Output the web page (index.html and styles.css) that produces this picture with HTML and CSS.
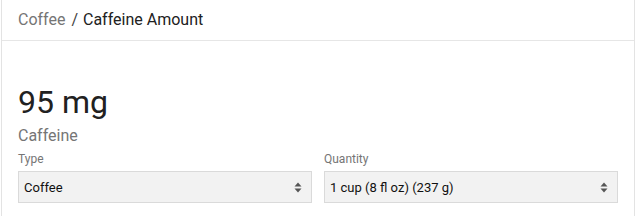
FILE: index.html
```html
<!DOCTYPE html>
<html lang="en">
<head>
    <meta charset="UTF-8">
    <meta name="viewport" content="width=device-width, initial-scale=1.0">
    <title>Caffeine Amount</title>
    <link rel="stylesheet" href="styles.css">
</head>
<body>
    <div class="card">
        <div class="card-header">
            <span class="crumb">Coffee</span>
            <span class="sep">/</span>
            <span class="current">Caffeine Amount</span>
        </div>
        <div class="card-body">
            <div class="amount">95 mg</div>
            <div class="amount-label">Caffeine</div>
            <div class="fields">
                <div class="field">
                    <label class="field-label">Type</label>
                    <div class="select-wrap">
                        <select class="select">
                            <option>Coffee</option>
                        </select>
                        <svg class="select-arrow" width="8" height="11" viewBox="0 0 8 11">
                            <path d="M4 0.5 L7.5 4.5 L0.5 4.5 Z M4 10.5 L7.5 6.5 L0.5 6.5 Z" fill="#555"/>
                        </svg>
                    </div>
                </div>
                <div class="field">
                    <label class="field-label">Quantity</label>
                    <div class="select-wrap">
                        <select class="select">
                            <option>1 cup (8 fl oz) (237 g)</option>
                        </select>
                        <svg class="select-arrow" width="8" height="11" viewBox="0 0 8 11">
                            <path d="M4 0.5 L7.5 4.5 L0.5 4.5 Z M4 10.5 L7.5 6.5 L0.5 6.5 Z" fill="#555"/>
                        </svg>
                    </div>
                </div>
            </div>
        </div>
    </div>
</body>
</html>
```

FILE: styles.css
```css
* {
    margin: 0;
    padding: 0;
    box-sizing: border-box;
}

body {
    font-family: Roboto, "Liberation Sans", sans-serif;
    color: #212121;
    background: #fff;
}

.card {
    margin-left: 1px;
    width: 634px;
    min-height: 216px;
    border-left: 1px solid #e3e3e3;
    border-right: 1px solid #e3e3e3;
}

.card-header {
    height: 41px;
    line-height: 40px;
    padding: 0 16px;
    font-size: 16px;
    border-bottom: 1px solid #e6e6e6;
}

.crumb {
    color: #757575;
}

.sep {
    color: #424242;
    margin: 0 1px 0 2px;
}

.card-body {
    padding: 43px 16px 0;
}

.amount {
    font-size: 32px;
    line-height: 36px;
}

.amount-label {
    margin-top: 6px;
    font-size: 16px;
    line-height: 20px;
    color: #757575;
}

.fields {
    display: grid;
    grid-template-columns: 1fr 1fr;
    gap: 12px;
    margin-top: 5px;
}

.field-label {
    display: block;
    font-size: 12px;
    line-height: 16px;
    color: #757575;
    margin-bottom: 4px;
}

.select-wrap {
    position: relative;
}

.select {
    appearance: none;
    -webkit-appearance: none;
    display: block;
    width: 100%;
    height: 32px;
    padding: 0 24px 0 5px;
    font-family: Roboto, "Liberation Sans", sans-serif;
    font-size: 13px;
    color: #111;
    background: #f2f2f2;
    border: 1px solid #dadada;
    border-radius: 0;
}

.select-arrow {
    position: absolute;
    right: 10px;
    top: 11px;
}
```
